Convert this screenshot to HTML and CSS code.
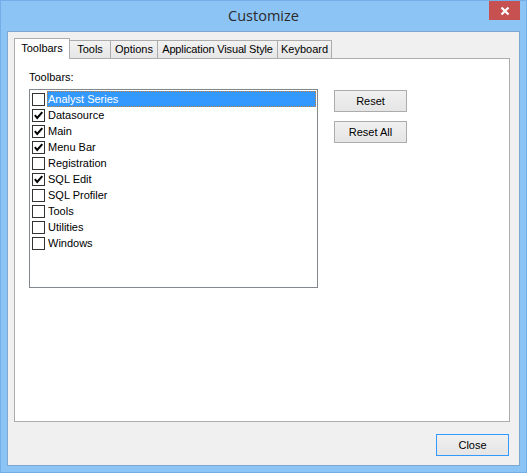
FILE: index.html
```html
<!DOCTYPE html>
<html>
<head>
<meta charset="utf-8">
<link rel="stylesheet" href="styles.css">
</head>
<body>
<div class="window">
  <div class="titlebar">
    <div class="title">Customize</div>
    <div class="close-x">
      <svg width="10" height="10" viewBox="0 0 10 10"><path d="M1.5 1.5 L8.5 8.5 M8.5 1.5 L1.5 8.5" stroke="#fff" stroke-width="2.2" fill="none"/></svg>
    </div>
  </div>
  <div class="client">
    <div class="tabs">
      <div class="tab active w-toolbars">Toolbars</div>
      <div class="tab w-tools">Tools</div>
      <div class="tab w-options">Options</div>
      <div class="tab w-avs">Application Visual Style</div>
      <div class="tab w-kb">Keyboard</div>
    </div>
    <div class="panel">
      <div class="left">
        <div class="label">Toolbars:</div>
        <div class="listbox">
          <div class="row selected"><span class="cb"></span><span class="txt">Analyst Series</span></div>
          <div class="row"><span class="cb on"><svg width="11" height="11" viewBox="0 0 11 11"><path d="M1.8 5.2 L4.2 8 L9.3 2.2" stroke="#000" stroke-width="2" fill="none"/></svg></span><span class="txt">Datasource</span></div>
          <div class="row"><span class="cb on"><svg width="11" height="11" viewBox="0 0 11 11"><path d="M1.8 5.2 L4.2 8 L9.3 2.2" stroke="#000" stroke-width="2" fill="none"/></svg></span><span class="txt">Main</span></div>
          <div class="row"><span class="cb on"><svg width="11" height="11" viewBox="0 0 11 11"><path d="M1.8 5.2 L4.2 8 L9.3 2.2" stroke="#000" stroke-width="2" fill="none"/></svg></span><span class="txt">Menu Bar</span></div>
          <div class="row"><span class="cb"></span><span class="txt">Registration</span></div>
          <div class="row"><span class="cb on"><svg width="11" height="11" viewBox="0 0 11 11"><path d="M1.8 5.2 L4.2 8 L9.3 2.2" stroke="#000" stroke-width="2" fill="none"/></svg></span><span class="txt">SQL Edit</span></div>
          <div class="row"><span class="cb"></span><span class="txt">SQL Profiler</span></div>
          <div class="row"><span class="cb"></span><span class="txt">Tools</span></div>
          <div class="row"><span class="cb"></span><span class="txt">Utilities</span></div>
          <div class="row"><span class="cb"></span><span class="txt">Windows</span></div>
        </div>
      </div>
      <div class="right">
        <button class="btn">Reset</button>
        <button class="btn">Reset All</button>
      </div>
    </div>
    <div class="footer">
      <button class="btn default">Close</button>
    </div>
  </div>
</div>
</body>
</html>
```
FILE: styles.css
```css
html, body {
  margin: 0;
  padding: 0;
}
body {
  width: 527px;
  height: 473px;
  overflow: hidden;
  font-family: "Liberation Sans", Arial, sans-serif;
  font-size: 11px;
  color: #000;
}
.window {
  box-sizing: border-box;
  width: 527px;
  height: 473px;
  background: #8cc4f6;
  border: 1px solid #74aee6;
  display: flex;
  flex-direction: column;
}
.titlebar {
  height: 30px;
  display: flex;
  align-items: flex-start;
  padding-left: 37px;
}
.title {
  flex: 1;
  text-align: center;
  font-family: "Open Sans", "Noto Sans", sans-serif;
  font-size: 14.5px;
  color: #2b2b2b;
  line-height: 30px;
}
.close-x {
  width: 31px;
  height: 19px;
  margin-right: 6px;
  background: #c75050;
  display: flex;
  align-items: center;
  justify-content: center;
}
.close-x svg { display: block; }
.client {
  flex: 1;
  margin: 0 6px 6px 6px;
  border: 1px solid #7fa8d0;
  background: #f0f0f0;
  padding: 6px 10px 0 6px;
  display: flex;
  flex-direction: column;
}
.tabs {
  display: flex;
  align-items: flex-end;
  height: 20px;
  position: relative;
  z-index: 1;
}
.tab {
  box-sizing: border-box;
  height: 18px;
  border: 1px solid #acacac;
  border-bottom: none;
  background: linear-gradient(#f2f2f2, #e6e6e6);
  text-align: center;
  line-height: 17px;
  white-space: nowrap;
  margin-left: -1px;
}
.tab.active {
  height: 21px;
  background: #fff;
  margin-bottom: -1px;
  line-height: 19px;
  margin-left: 0;
}
.w-toolbars { width: 56px; }
.w-tools { width: 42px; }
.w-options { width: 48px; }
.w-avs { width: 121px; letter-spacing: -0.15px; }
.w-kb { width: 55px; }
.panel {
  box-sizing: border-box;
  height: 364px;
  width: 496px;
  background: #fff;
  border: 1px solid #acacac;
  padding: 12px 0 0 14px;
  display: flex;
  align-items: flex-start;
}
.label {
  line-height: 13px;
  margin-bottom: 5px;
}
.listbox {
  box-sizing: border-box;
  width: 289px;
  height: 199px;
  border: 1px solid #828790;
  padding: 1px 1px 0 0;
}
.row {
  height: 16px;
  display: flex;
  align-items: center;
}
.cb {
  box-sizing: border-box;
  width: 13px;
  height: 13px;
  border: 1px solid #333;
  background: #fff;
  margin-left: 2px;
  margin-right: 2px;
  display: flex;
  align-items: center;
  justify-content: center;
}
.cb svg { display: block; }
.txt {
  flex: 1;
  box-sizing: border-box;
  height: 16px;
  line-height: 14px;
  padding-left: 0;
  border: 1px solid transparent;
}
.row.selected .txt {
  background: #3399ff;
  color: #fff;
  border: 1px dotted #c08040;
}
.right {
  margin-left: 16px;
  padding-top: 19px;
  display: flex;
  flex-direction: column;
  gap: 9px;
}
.btn {
  box-sizing: border-box;
  width: 73px;
  height: 22px;
  border: 1px solid #acacac;
  background: linear-gradient(#f0f0f0, #e5e5e5);
  font-family: "Liberation Sans", Arial, sans-serif;
  font-size: 11px;
  color: #000;
  padding: 0;
  margin: 0;
}
.btn.default {
  border-color: #3399ff;
}
.footer {
  display: flex;
  justify-content: flex-end;
  padding-top: 12px;
}
```
